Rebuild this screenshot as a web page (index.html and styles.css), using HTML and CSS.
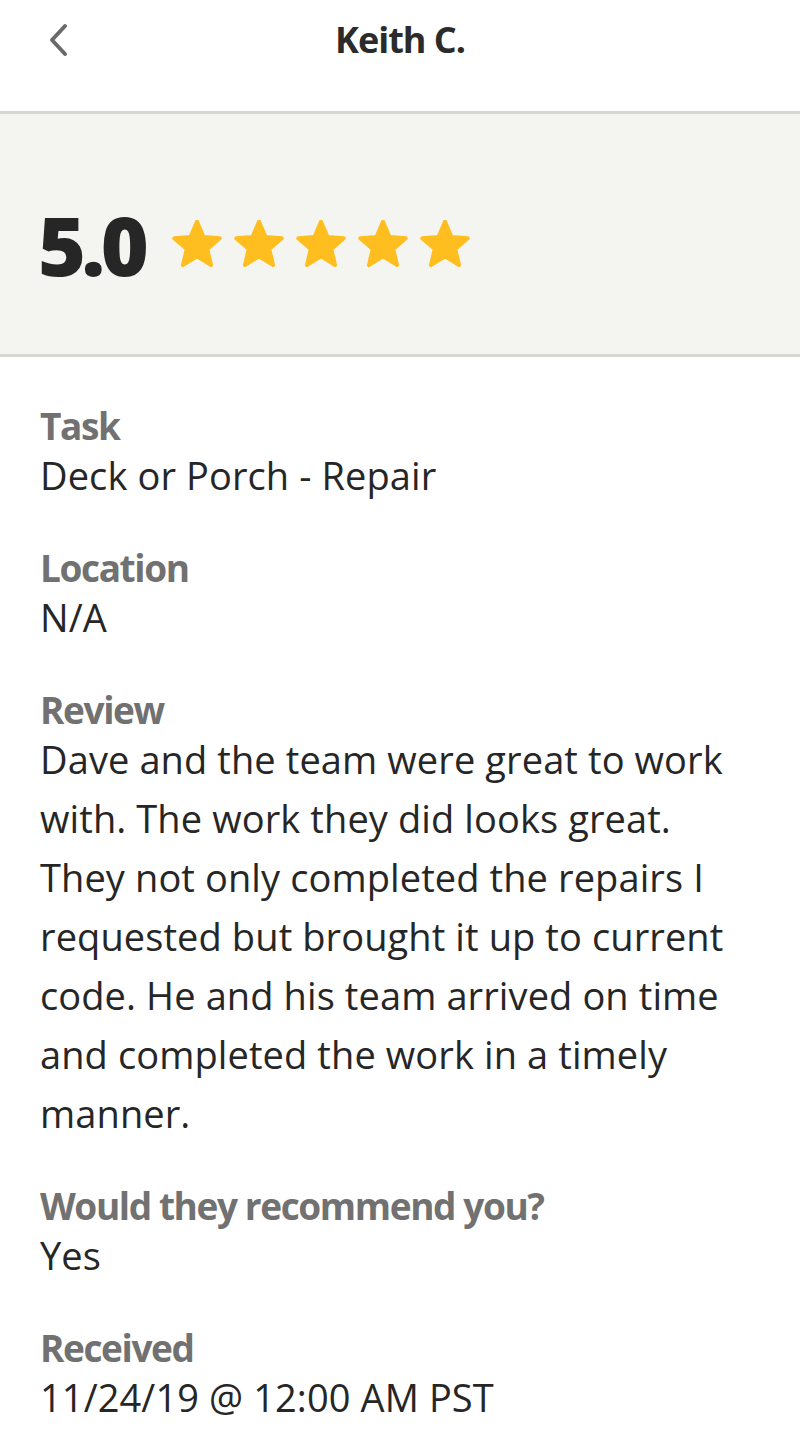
FILE: index.html
```html
<!DOCTYPE html>
<html>
<head>
<meta charset="utf-8">
<link rel="stylesheet" href="styles.css">
</head>
<body>
<header class="topbar">
  <span class="back">
    <svg width="24" height="34" viewBox="0 0 24 34"><path d="M19 3 L6 17 L19 31" fill="none" stroke="#6a6a6a" stroke-width="4" stroke-linecap="round" stroke-linejoin="round"/></svg>
  </span>
  <h1 class="title">Keith C.</h1>
</header>
<section class="rating">
  <span class="score">5.0</span>
  <div class="stars">
    <svg class="star" viewBox="1.6 1.6 20.8 20"><path d="M12 2.2 L14.7 8.6 L21.5 9.2 L16.3 13.7 L17.9 20.4 L12 16.8 L6.1 20.4 L7.7 13.7 L2.5 9.2 L9.3 8.6 Z" fill="#FFBE1F" stroke="#FFBE1F" stroke-width="1.6" stroke-linejoin="round"/></svg>
    <svg class="star" viewBox="1.6 1.6 20.8 20"><path d="M12 2.2 L14.7 8.6 L21.5 9.2 L16.3 13.7 L17.9 20.4 L12 16.8 L6.1 20.4 L7.7 13.7 L2.5 9.2 L9.3 8.6 Z" fill="#FFBE1F" stroke="#FFBE1F" stroke-width="1.6" stroke-linejoin="round"/></svg>
    <svg class="star" viewBox="1.6 1.6 20.8 20"><path d="M12 2.2 L14.7 8.6 L21.5 9.2 L16.3 13.7 L17.9 20.4 L12 16.8 L6.1 20.4 L7.7 13.7 L2.5 9.2 L9.3 8.6 Z" fill="#FFBE1F" stroke="#FFBE1F" stroke-width="1.6" stroke-linejoin="round"/></svg>
    <svg class="star" viewBox="1.6 1.6 20.8 20"><path d="M12 2.2 L14.7 8.6 L21.5 9.2 L16.3 13.7 L17.9 20.4 L12 16.8 L6.1 20.4 L7.7 13.7 L2.5 9.2 L9.3 8.6 Z" fill="#FFBE1F" stroke="#FFBE1F" stroke-width="1.6" stroke-linejoin="round"/></svg>
    <svg class="star" viewBox="1.6 1.6 20.8 20"><path d="M12 2.2 L14.7 8.6 L21.5 9.2 L16.3 13.7 L17.9 20.4 L12 16.8 L6.1 20.4 L7.7 13.7 L2.5 9.2 L9.3 8.6 Z" fill="#FFBE1F" stroke="#FFBE1F" stroke-width="1.6" stroke-linejoin="round"/></svg>
  </div>
</section>
<main class="details">
  <div class="field">
    <div class="label">Task</div>
    <div class="value">Deck or Porch - Repair</div>
  </div>
  <div class="field">
    <div class="label">Location</div>
    <div class="value">N/A</div>
  </div>
  <div class="field">
    <div class="label">Review</div>
    <div class="value">Dave and the team were great to work with. The work they did looks great. They not only completed the repairs I requested but brought it up to current code. He and his team arrived on time and completed the work in a timely manner.</div>
  </div>
  <div class="field">
    <div class="label">Would they recommend you?</div>
    <div class="value">Yes</div>
  </div>
  <div class="field">
    <div class="label">Received</div>
    <div class="value">11/24/19 @ 12:00 AM PST</div>
  </div>
</main>
</body>
</html>
```

FILE: styles.css
```css
* { box-sizing: border-box; }
html, body { margin: 0; padding: 0; background: #fff; }
body {
  font-family: "Open Sans", "Noto Sans", sans-serif;
  color: #2a2a2a;
  width: 800px;
}
.topbar {
  position: relative;
  height: 114px;
  border-bottom: 3px solid #d6d6d4;
  display: flex;
  align-items: flex-start;
  justify-content: center;
}
.back {
  position: absolute;
  left: 46px;
  top: 23px;
  display: block;
  width: 24px;
  height: 34px;
}
.back svg { display: block; }
.title {
  margin: 0;
  padding-top: 16px;
  font-size: 36px;
  font-weight: 700;
  letter-spacing: -1px;
  line-height: 48px;
  color: #2b2b2b;
}
.rating {
  background: #f4f4f0;
  height: 243px;
  border-bottom: 3px solid #d6d6d4;
  display: flex;
  align-items: center;
  padding: 20px 40px 0 38px;
  gap: 28px;
}
.score {
  font-size: 82px;
  font-weight: 800;
  letter-spacing: -4.5px;
  color: #262626;
  line-height: 1;
}
.stars { display: flex; gap: 12px; align-items: center; }
.star { width: 50px; height: 48px; display: block; }
.details {
  padding: 47px 40px 20px 40px;
  display: flex;
  flex-direction: column;
  gap: 41px;
}
.label {
  font-size: 37px;
  font-weight: 700;
  color: #717171;
  letter-spacing: -1.4px;
  line-height: 44px;
}
.value {
  font-size: 38px;
  font-weight: 400;
  color: #262626;
  line-height: 59px;
  letter-spacing: 0.1px;
  margin-top: -2px;
}
```
